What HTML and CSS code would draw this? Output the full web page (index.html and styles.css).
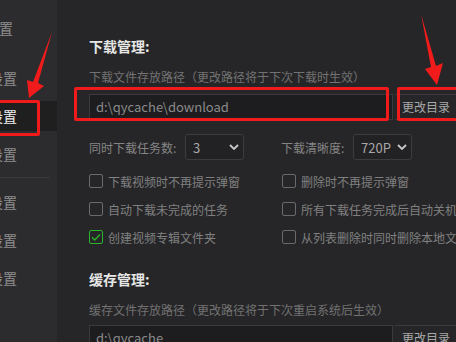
FILE: index.html
```html
<!DOCTYPE html>
<html>
<head>
  <meta charset="UTF-8">
  <title>下载设置</title>
  <link rel="stylesheet" href="styles.css">
</head>
<body>
  <div class="window">
    <div class="sidebar">
      <div class="nav-item first"><span>常规设置</span></div>
      <div class="nav-item"><span>播放设置</span></div>
      <div class="nav-item active"><span>下载设置</span></div>
      <div class="nav-item"><span>上传设置</span></div>
      <div class="nav-divider"></div>
      <div class="nav-item"><span>隐私设置</span></div>
      <div class="nav-item"><span>消息设置</span></div>
      <div class="nav-item"><span>其他设置</span></div>
    </div>

    <div class="main">
      <div class="section-title">下载管理:</div>
      <div class="field-label">下载文件存放路径（更改路径将于下次下载时生效）</div>
      <div class="path-row">
        <div class="path-input">d:\qycache\download</div>
        <div class="path-btn">更改目录</div>
      </div>

      <div class="option-grid">
        <div class="option">
          <span class="option-label">同时下载任务数:</span>
          <div class="select">
            <span>3</span>
            <svg width="10" height="6" viewBox="0 0 10 6"><path d="M1 1l4 4 4-4" fill="none" stroke="#c8c8c8" stroke-width="1.8"/></svg>
          </div>
        </div>
        <div class="option">
          <span class="option-label">下载清晰度:</span>
          <div class="select">
            <span>720P</span>
            <svg width="10" height="6" viewBox="0 0 10 6"><path d="M1 1l4 4 4-4" fill="none" stroke="#c8c8c8" stroke-width="1.8"/></svg>
          </div>
        </div>
      </div>

      <div class="check-grid">
        <label class="check"><span class="box"></span>下载视频时不再提示弹窗</label>
        <label class="check"><span class="box"></span>删除时不再提示弹窗</label>
        <label class="check"><span class="box"></span>自动下载未完成的任务</label>
        <label class="check"><span class="box"></span>所有下载任务完成后自动关机</label>
        <label class="check"><span class="box checked"><svg width="12" height="12" viewBox="0 0 12 12"><path d="M2 6.2l2.8 2.8L10 3.4" fill="none" stroke="#2cb52c" stroke-width="1.4"/></svg></span>创建视频专辑文件夹</label>
        <label class="check"><span class="box"></span>从列表删除时同时删除本地文件</label>
      </div>

      <div class="section-title second">缓存管理:</div>
      <div class="field-label">缓存文件存放路径（更改路径将于下次重启系统后生效）</div>
      <div class="path-row tight">
        <div class="path-input">d:\qycache</div>
        <div class="path-btn">更改目录</div>
      </div>

      <!-- annotation boxes -->
      <div class="mark mark-input"></div>
      <div class="mark mark-btn"></div>
    </div>

    <div class="mark mark-nav"></div>
    <svg class="arrows" width="456" height="342" viewBox="0 0 456 342">
      <polygon points="52,32 38,83 44,86 29,98 27,80 33,82" fill="#f21b1b"/>
      <polygon points="421,14 436,66 443,63 437,85 425,69 431,67" fill="#f21b1b"/>
    </svg>
  </div>
</body>
</html>
```

FILE: styles.css
```css
body {
  margin: 0;
  background: #262628;
  font-family: "Noto Sans CJK SC", "Noto Sans", sans-serif;
  overflow: hidden;
}
.window {
  position: relative;
  display: flex;
  width: 456px;
  height: 342px;
  overflow: hidden;
}

/* left nav */
.sidebar {
  width: 57px;
  flex-shrink: 0;
  background: #2c2c2e;
  padding-top: 13px;
  overflow: hidden;
}
.nav-item {
  height: 30px;
  display: flex;
  align-items: center;
  margin-bottom: 8px;
  font-size: 14px;
  color: #8e8e8e;
  white-space: nowrap;
}
.nav-item span {
  margin-left: -39px;
}
.nav-item.first {
  margin-bottom: 20px;
}
.nav-item.first span {
  margin-left: -43px;
}
.nav-item.active {
  background: #1f1f20;
  color: #f0f0f0;
}
.nav-divider {
  height: 1px;
  width: 50px;
  background: #3a3a3c;
  margin: 6px 0 9px;
}

/* content */
.main {
  position: relative;
  flex: 1;
  padding: 36px 0 0 32px;
  min-width: 0;
}
.section-title {
  font-size: 14px;
  line-height: 20px;
  font-weight: bold;
  color: #e6e6e6;
}
.section-title.second {
  margin-top: 18px;
}
.field-label {
  margin-top: 13px;
  font-size: 12px;
  line-height: 16px;
  color: #727272;
  white-space: nowrap;
}
.path-row {
  display: flex;
  margin-top: 9px;
  height: 26px;
  margin-right: -20px;
}
.path-row.tight {
  margin-top: 7px;
}
.path-input {
  width: 304px;
  box-sizing: border-box;
  background: #1d1d1f;
  border: 1px solid #3a3a3c;
  padding-left: 6px;
  font-size: 13px;
  line-height: 24px;
  color: #8a8a8a;
}
.path-btn {
  flex: 1;
  margin-left: 2px;
  box-sizing: border-box;
  border-top: 1px solid #3a3a3c;
  border-bottom: 1px solid #3a3a3c;
  padding-left: 7px;
  font-size: 12px;
  line-height: 24px;
  color: #a8a8a8;
}

.option-grid {
  display: grid;
  grid-template-columns: 192px 1fr;
  margin-top: 14px;
}
.option {
  display: flex;
  align-items: center;
  font-size: 12px;
  color: #858585;
}
.option-label {
  width: 96px;
}
.option + .option .option-label {
  width: 72px;
}
.select {
  width: 59px;
  height: 26px;
  box-sizing: border-box;
  border: 1px solid #3c3c3e;
  border-radius: 3px;
  background: #222224;
  display: flex;
  align-items: center;
  justify-content: space-between;
  padding: 0 4px 0 7px;
  font-size: 13px;
  color: #a8a8a8;
}

.check-grid {
  display: grid;
  grid-template-columns: 193px 1fr;
  grid-auto-rows: 28px;
  margin-top: 7px;
}
.check {
  display: flex;
  align-items: center;
  font-size: 12px;
  color: #808080;
  white-space: nowrap;
}
.box {
  width: 14px;
  height: 14px;
  box-sizing: border-box;
  border: 1px solid #6a6a6a;
  border-radius: 2px;
  margin-right: 5px;
  display: flex;
  align-items: center;
  justify-content: center;
}
.box.checked {
  border: 1.5px solid #2cb52c;
}

/* red annotations */
.mark {
  position: absolute;
  border: 3px solid #f21b1b;
  border-radius: 2px;
  box-sizing: border-box;
}
.mark-input {
  left: 17px;
  top: 87px;
  width: 315px;
  height: 34px;
}
.mark-btn {
  left: 340px;
  top: 87px;
  width: 80px;
  height: 34px;
}
.mark-nav {
  left: -10px;
  top: 100px;
  width: 50px;
  height: 36px;
}
.arrows {
  position: absolute;
  left: 0;
  top: 0;
  pointer-events: none;
}
```
